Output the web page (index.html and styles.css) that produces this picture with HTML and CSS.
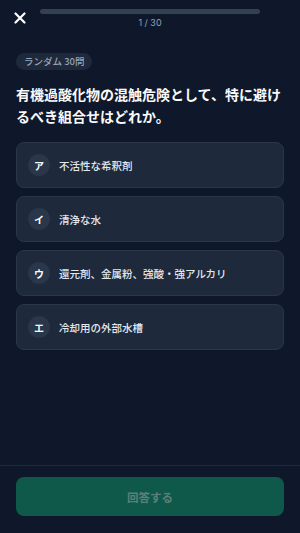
FILE: index.html
```html
<!DOCTYPE html>
<html lang="ja">
<head>
<meta charset="utf-8">
<link rel="stylesheet" href="styles.css">
</head>
<body>
<div class="app">
  <header class="header">
    <div class="close">
      <svg width="12" height="12" viewBox="0 0 12 12"><path d="M1.5 1.5 L10.5 10.5 M10.5 1.5 L1.5 10.5" stroke="#fff" stroke-width="2.2" stroke-linecap="round"/></svg>
    </div>
    <div class="progress">
      <div class="bar"><div class="fill" style="width:0%"></div></div>
      <div class="count">1 / 30</div>
    </div>
    <div class="spacer"></div>
  </header>
  <main class="main">
    <span class="badge">ランダム 30問</span>
    <h1 class="question">有機過酸化物の混触危険として、特に避けるべき組合せはどれか。</h1>
    <div class="options">
      <div class="option"><span class="mark">ア</span><span class="label">不活性な希釈剤</span></div>
      <div class="option"><span class="mark">イ</span><span class="label">清浄な水</span></div>
      <div class="option"><span class="mark">ウ</span><span class="label">還元剤、金属粉、強酸・強アルカリ</span></div>
      <div class="option"><span class="mark">エ</span><span class="label">冷却用の外部水槽</span></div>
    </div>
  </main>
  <footer class="footer">
    <button class="submit">回答する</button>
  </footer>
</div>
</body>
</html>
```
FILE: styles.css
```css
html, body {
  margin: 0;
  padding: 0;
  background: #0f172a;
}
body {
  font-family: "Noto Sans CJK JP", "Noto Sans", sans-serif;
  color: #f1f5f9;
}
.app {
  display: flex;
  flex-direction: column;
  height: 533px;
}
.header {
  display: grid;
  grid-template-columns: 40px 1fr 40px;
  align-items: start;
  height: 28px;
}
.close {
  display: flex;
  justify-content: center;
  padding-top: 12px;
}
.close svg { display: block; }
.progress {
  padding-top: 9px;
  display: flex;
  flex-direction: column;
  align-items: center;
}
.bar {
  width: 100%;
  height: 5px;
  border-radius: 3px;
  background: #334155;
  overflow: hidden;
}
.fill {
  height: 100%;
  background: #10b981;
}
.count {
  margin-top: 3px;
  font-size: 9px;
  line-height: 12px;
  color: #94a3b8;
  font-family: "Inter", "Noto Sans CJK JP", sans-serif;
}
.main {
  flex: 1;
  display: flex;
  flex-direction: column;
  align-items: stretch;
  padding: 25px 16px 0;
}
.badge {
  align-self: flex-start;
  height: 17px;
  line-height: 17px;
  padding: 0 8px;
  border-radius: 9px;
  background: #1e293b;
  color: #94a3b8;
  font-size: 9.5px;
  font-weight: 500;
}
.question {
  margin: 13px 0 15px;
  font-size: 14px;
  line-height: 22px;
  font-weight: 700;
  color: #f8fafc;
}
.options {
  display: flex;
  flex-direction: column;
  gap: 8px;
}
.option {
  height: 46px;
  box-sizing: border-box;
  display: flex;
  align-items: center;
  gap: 9px;
  padding: 0 11px;
  background: #1e293b;
  border: 1px solid #2b3649;
  border-radius: 8px;
}
.mark {
  width: 22px;
  height: 22px;
  border-radius: 50%;
  background: #2a3649;
  display: flex;
  align-items: center;
  justify-content: center;
  font-size: 10px;
  font-weight: 700;
  color: #f8fafc;
}
.label {
  font-size: 10.5px;
  font-weight: 500;
  color: #e2e8f0;
}
.footer {
  border-top: 1px solid #1e293b;
  padding: 11px 16px 17px;
}
.submit {
  width: 100%;
  height: 39px;
  border: none;
  border-radius: 8px;
  background: #0f594b;
  color: #5e7f77;
  font-family: "Noto Sans CJK JP", sans-serif;
  font-size: 11.5px;
  font-weight: 700;
}
```
